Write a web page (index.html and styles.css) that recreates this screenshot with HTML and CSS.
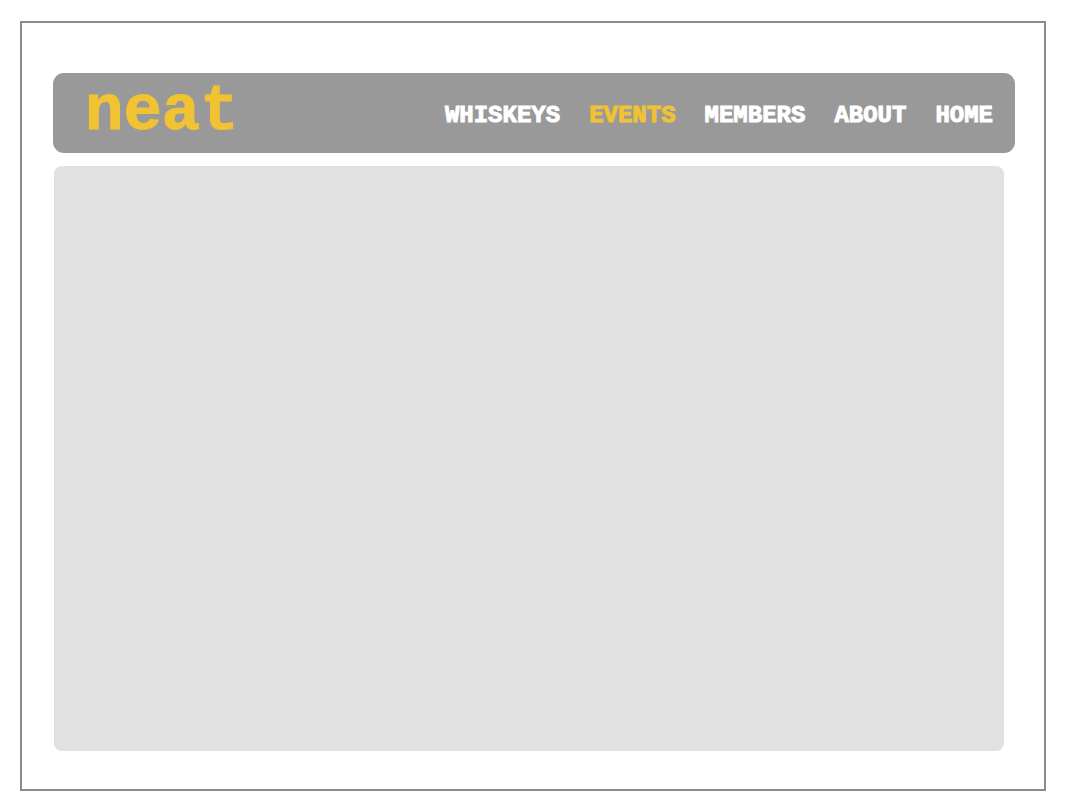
FILE: index.html
```html
<!DOCTYPE html>
<html lang="en">
<head>
<meta charset="utf-8">
<title>neat</title>
<link rel="stylesheet" href="styles.css">
</head>
<body>
<div class="page">
  <header class="site-header">
    <a class="brand" href="#">neat</a>
    <nav class="nav" aria-label="Main">
      <a class="nav-link" href="#">WHISKEYS</a>
      <a class="nav-link nav-link-active" href="#" aria-current="page">EVENTS</a>
      <a class="nav-link" href="#">MEMBERS</a>
      <a class="nav-link" href="#">ABOUT</a>
      <a class="nav-link" href="#">HOME</a>
    </nav>
  </header>
  <main class="content"></main>
</div>
</body>
</html>
```
FILE: styles.css
```css
* {
  box-sizing: border-box;
}

body {
  margin: 0;
  padding: 21px 19px 19px 20px;
  min-height: 100vh;
  display: flex;
  background: #fff;
  font-family: "Courier New", "Liberation Mono", monospace;
  font-weight: 700;
}

.page {
  flex: 1;
  display: flex;
  flex-direction: column;
  gap: 13px;
  padding: 50px 29px 38px 31px;
  border: 2px solid #8c8c8c;
}

.site-header {
  display: flex;
  align-items: center;
  justify-content: space-between;
  min-height: 80px;
  padding: 0 22px 0 32px;
  border-radius: 11px;
  background: #999;
}

.brand {
  padding-bottom: 2px;
  color: #f1c232;
  font-size: 64px;
  line-height: 76px;
  text-decoration: none;
  -webkit-text-stroke: 1px currentColor;
}

.nav {
  display: flex;
  gap: 29px;
  padding-top: 6px;
}

.nav-link {
  color: #fff;
  font-size: 24px;
  line-height: 28px;
  text-decoration: none;
  -webkit-text-stroke: 1px currentColor;
}

.nav-link-active {
  color: #f1c232;
}

.content {
  flex: 1;
  margin: 0 11px 0 1px;
  border-radius: 8px;
  background: #e1e1e1;
}
```
